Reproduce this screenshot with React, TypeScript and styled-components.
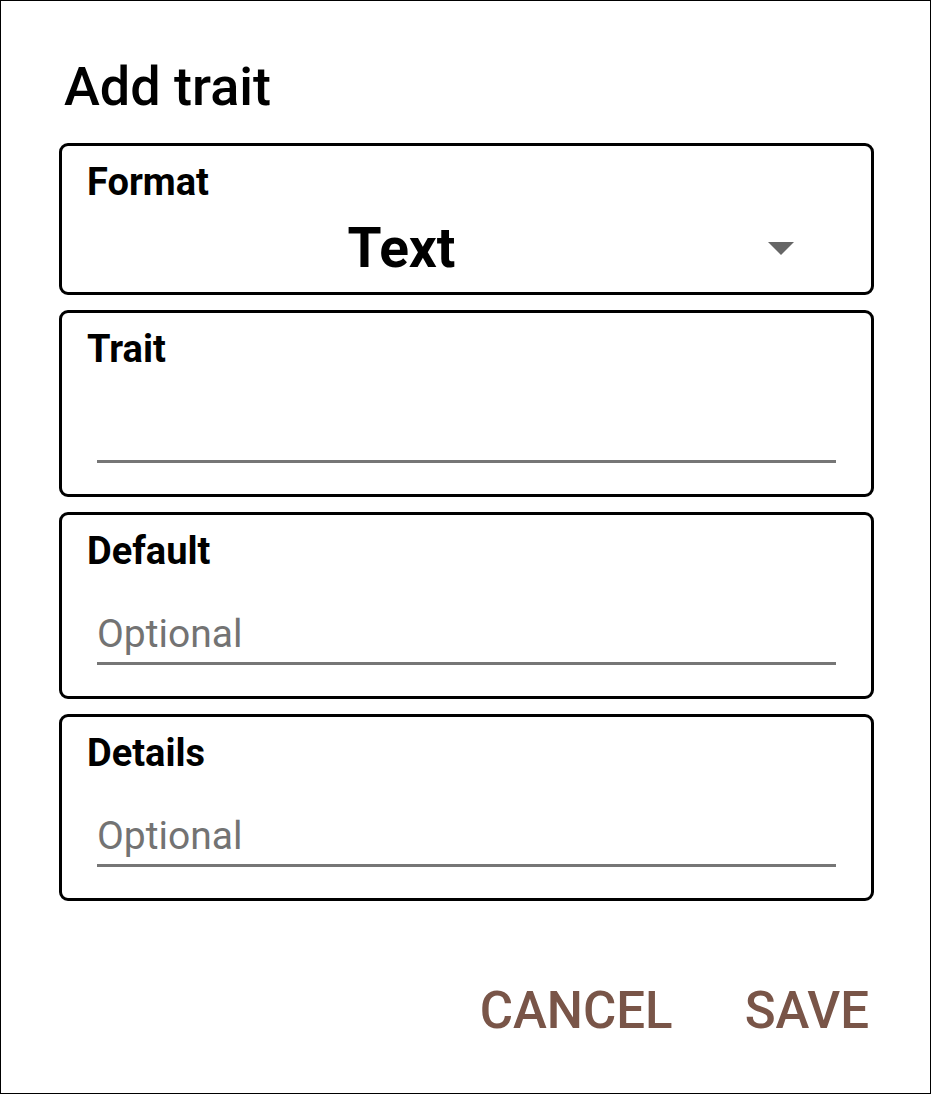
import React from "react";
import styled, { createGlobalStyle } from "styled-components";

const GlobalStyle = createGlobalStyle`
  html, body {
    margin: 0;
    padding: 0;
    background: #ffffff;
  }
  body {
    font-family: Roboto, "Noto Sans", "Liberation Sans", sans-serif;
    color: #000;
  }
`;

const Frame = styled.div`
  box-sizing: border-box;
  width: 931px;
  height: 1094px;
  border: 1px solid #000;
  background: #fff;
  padding: 54px 0 0 0;
  display: flex;
  flex-direction: column;
`;

const Title = styled.h1`
  margin: 0 0 25px 63px;
  font-size: 54px;
  line-height: 63px;
  font-weight: 500;
  color: #000;
`;

const Cards = styled.div`
  display: flex;
  flex-direction: column;
  gap: 15px;
  margin: 0 0 0 58px;
  width: 815px;
`;

const Card = styled.section<{ $padBottom: number }>`
  box-sizing: border-box;
  border: 3px solid #000;
  border-radius: 9px;
  padding: 15px 25px ${(p) => p.$padBottom}px 25px;
  display: flex;
  flex-direction: column;
`;

const Label = styled.div`
  font-size: 38px;
  line-height: 42px;
  font-weight: 700;
  color: #000;
`;

const SelectRow = styled.div`
  display: flex;
  align-items: center;
  margin-top: 15px;
`;

const SelectValue = styled.div`
  flex: 1;
  text-align: center;
  font-size: 55px;
  line-height: 61px;
  font-weight: 700;
  color: #000;
`;

const ArrowBox = styled.div`
  width: 130px;
  display: flex;
  justify-content: center;
  align-items: center;
`;

const Input = styled.div<{ $placeholder?: boolean }>`
  margin: 40px 10px 0 10px;
  padding-bottom: 6px;
  border-bottom: 3px solid #767676;
  font-size: 39px;
  line-height: 44px;
  height: 44px;
  font-weight: 400;
  color: ${(p) => (p.$placeholder ? "#737373" : "#000")};
`;

const Actions = styled.div`
  display: flex;
  justify-content: flex-end;
  gap: 72px;
  margin-top: 80px;
  padding-right: 61px;
`;

const ActionButton = styled.button`
  border: none;
  background: none;
  padding: 0;
  margin: 0;
  font-family: Roboto, "Noto Sans", "Liberation Sans", sans-serif;
  font-size: 51px;
  line-height: 60px;
  font-weight: 500;
  color: #795548;
  text-transform: uppercase;
  cursor: pointer;
`;

const DropArrow = () => (
  <svg width="26" height="14" viewBox="0 0 26 14" aria-hidden="true">
    <polygon points="0,0 26,0 13,13" fill="#666666" />
  </svg>
);

export default function App() {
  return (
    <>
      <GlobalStyle />
      <Frame>
        <Title>Add trait</Title>
        <Cards>
          <Card $padBottom={13}>
            <Label>Format</Label>
            <SelectRow>
              <SelectValue>Text</SelectValue>
              <ArrowBox>
                <DropArrow />
              </ArrowBox>
            </SelectRow>
          </Card>
          <Card $padBottom={31}>
            <Label>Trait</Label>
            <Input />
          </Card>
          <Card $padBottom={31}>
            <Label>Default</Label>
            <Input $placeholder>Optional</Input>
          </Card>
          <Card $padBottom={31}>
            <Label>Details</Label>
            <Input $placeholder>Optional</Input>
          </Card>
        </Cards>
        <Actions>
          <ActionButton>Cancel</ActionButton>
          <ActionButton>Save</ActionButton>
        </Actions>
      </Frame>
    </>
  );
}
